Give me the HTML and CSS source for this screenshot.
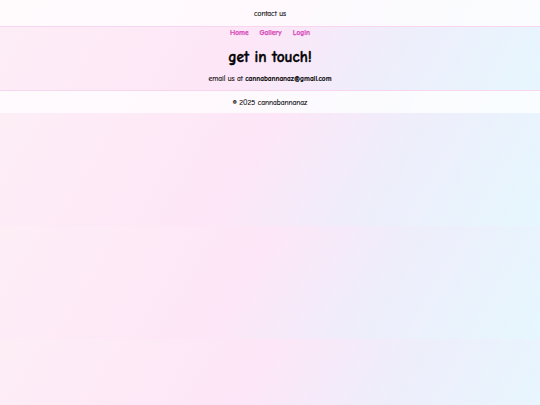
FILE: index.html
```html
<!DOCTYPE html>
<html lang="en">
<head>
<meta charset="utf-8">
<title>contact us</title>
<link rel="stylesheet" href="styles.css">
</head>
<body>
<header class="top">
  <span class="top-title">contact us</span>
</header>
<nav class="nav">
  <a href="#" class="nav-link">Home</a>
  <a href="#" class="nav-link">Gallery</a>
  <a href="#" class="nav-link">Login</a>
</nav>
<main class="main">
  <h1 class="title">get in touch!</h1>
  <p class="email">email us at <strong>cannabannanaz@gmail.com</strong></p>
</main>
<footer class="foot">© 2025 cannabannanaz</footer>
</body>
</html>
```
FILE: styles.css
```css
html {
  margin: 0;
}
body {
  margin: 0;
  font-family: "Comic Sans MS", "Comic Neue", cursive;
  color: #000;
  background: linear-gradient(120deg, #fdeef6 0%, #fde6f7 45%, #eeeefb 70%, #e6f7fe 100%);
  background-size: 100% 113px;
}
.top {
  height: 26px;
  display: flex;
  align-items: center;
  justify-content: center;
  background: rgba(255, 255, 255, 0.75);
  border-bottom: 1px solid #f8d6ef;
}
.top-title {
  font-size: 7.3px;
  -webkit-text-stroke: 0.15px #000;
}
.nav {
  height: 10px;
  display: flex;
  justify-content: center;
  align-items: center;
  gap: 11px;
}
.nav-link {
  font-size: 7.3px;
  font-weight: 700;
  color: #d64bb8;
  -webkit-text-stroke: 0.25px #d64bb8;
  text-decoration: none;
}
.main {
  text-align: center;
  padding-bottom: 6px;
}
.title {
  margin: 10px 0 0;
  font-size: 15.3px;
  font-weight: 700;
  line-height: 20px;
  -webkit-text-stroke: 0.4px #000;
}
.email {
  margin: 7px 0 0;
  font-size: 7.3px;
  line-height: 10px;
  -webkit-text-stroke: 0.15px #000;
}
.foot {
  height: 22px;
  display: flex;
  align-items: center;
  justify-content: center;
  font-size: 7.3px;
  -webkit-text-stroke: 0.15px #000;
  background: rgba(255, 255, 255, 0.75);
  border-top: 1px solid #f8d6ef;
}
```
